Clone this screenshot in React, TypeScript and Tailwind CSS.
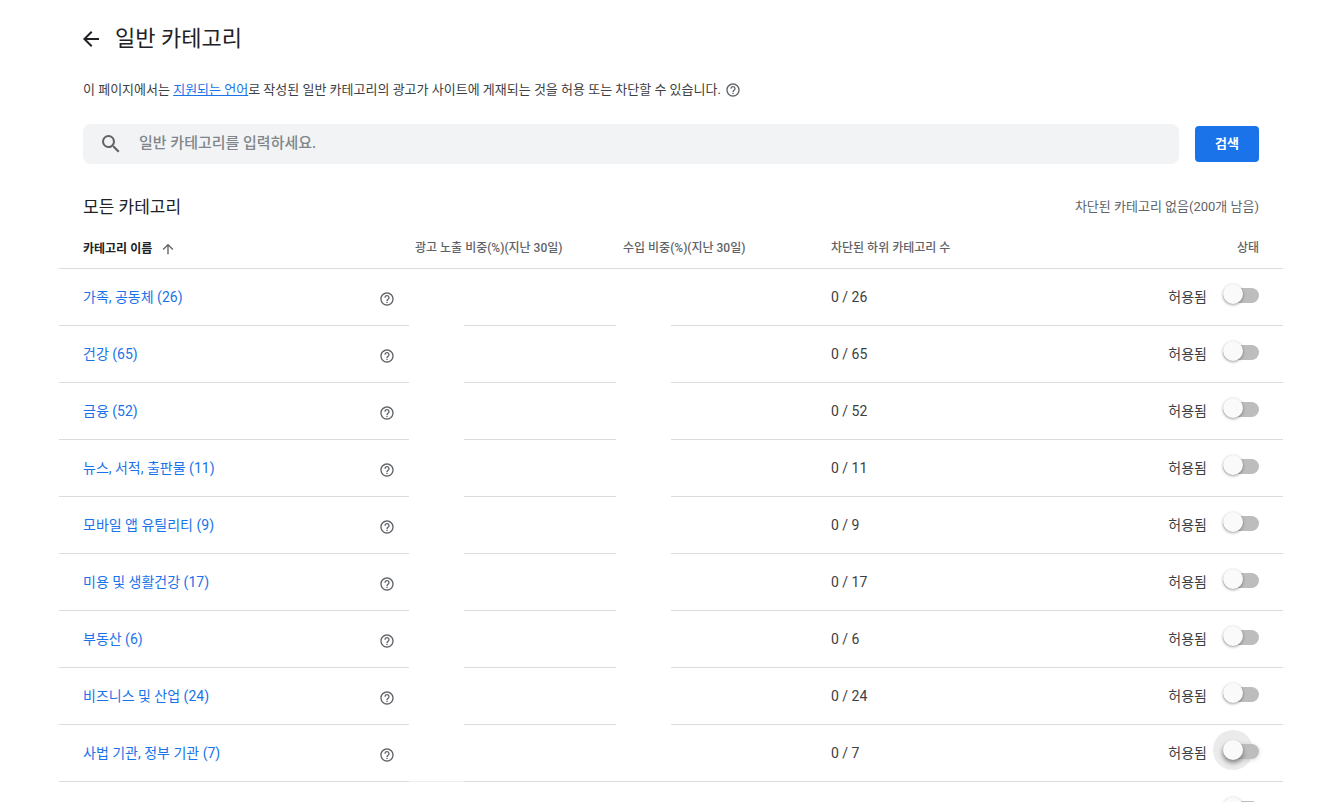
import { useState } from "react";
import clsx from "clsx";
import {
  MdArrowBack,
  MdArrowUpward,
  MdHelpOutline,
  MdSearch,
} from "react-icons/md";

interface Category {
  id: string;
  name?: string;
  count?: number;
  focused?: boolean;
}

const categories: Category[] = [
  { id: "family", name: "가족, 공동체", count: 26 },
  { id: "health", name: "건강", count: 65 },
  { id: "finance", name: "금융", count: 52 },
  { id: "news", name: "뉴스, 서적, 출판물", count: 11 },
  { id: "apps", name: "모바일 앱 유틸리티", count: 9 },
  { id: "beauty", name: "미용 및 생활건강", count: 17 },
  { id: "property", name: "부동산", count: 6 },
  { id: "business", name: "비즈니스 및 산업", count: 24 },
  { id: "law", name: "사법 기관, 정부 기관", count: 7, focused: true },
  { id: "next" },
];

// Share column: the figure area on the left has its own bottom line
function ShareCell({ line }: { line: string }) {
  return (
    <td className="p-0">
      <div className="flex h-[57px]">
        <span className={clsx("w-[55px] border-b", line)} />
        <span className="flex-1 border-b border-[#dadce0]" />
      </div>
    </td>
  );
}

interface CategoryRowProps {
  category: Category;
  blocked: boolean;
  onToggle: (id: string) => void;
}

function CategoryRow({ category, blocked, onToggle }: CategoryRowProps) {
  const { id, name, count, focused } = category;

  return (
    <tr>
      <td className="p-0">
        <div className="flex h-[57px] items-center justify-between border-b border-[#dadce0] pr-3.5 pl-6">
          {name && (
            <>
              <a href="#" className="text-[#1a73e8]">
                {name} ({count})
              </a>
              <button type="button" aria-label="도움말" className="mt-1">
                <MdHelpOutline className="size-4 text-[#5f6368]" />
              </button>
            </>
          )}
        </div>
      </td>
      <ShareCell line={focused ? "border-[#eeeeee]" : "border-transparent"} />
      <ShareCell line={focused ? "border-[#dadce0]" : "border-transparent"} />
      <td className="p-0">
        <div className="flex h-[57px] items-center border-b border-[#dadce0] pl-[7px]">
          {name && `0 / ${count}`}
        </div>
      </td>
      <td className="p-0">
        <div className="flex h-[57px] items-center justify-end border-b border-[#dadce0] pr-6">
          <label className="relative flex h-5 items-center gap-4">
            {name && (blocked ? "차단됨" : "허용됨")}
            {focused && (
              <span className="absolute -top-[13px] right-1.5 size-10 rounded-full bg-[#ebebeb]" />
            )}
            <input
              type="checkbox"
              role="switch"
              aria-label={name ?? "카테고리"}
              checked={blocked}
              onChange={() => onToggle(id)}
              className={clsx(
                "relative mb-[3px] h-[15px] w-9 cursor-pointer appearance-none rounded-full bg-[#bdbdbd] before:absolute before:-top-1 before:left-0 before:size-5 before:rounded-full before:bg-[#fafafa] checked:bg-[#8ab4f8] checked:before:left-4 checked:before:bg-[#1a73e8]",
                focused
                  ? "shadow-[0_1px_5px_rgba(0,0,0,0.15)] before:shadow-[0_3px_5px_rgba(0,0,0,0.4)]"
                  : "before:shadow-[0_1px_3px_rgba(0,0,0,0.4)]"
              )}
            />
          </label>
        </div>
      </td>
    </tr>
  );
}

export default function App() {
  const [query, setQuery] = useState("");
  const [blockedIds, setBlockedIds] = useState<string[]>([]);

  const handleToggle = (id: string) => {
    setBlockedIds((prev) =>
      prev.includes(id) ? prev.filter((b) => b !== id) : [...prev, id]
    );
  };

  return (
    <main className="h-screen overflow-hidden bg-white px-[59px] pt-5 font-[Roboto,'Noto_Sans_CJK_KR',sans-serif] text-sm text-[#3c4043]">
      {/* Title */}
      <header className="flex h-[38px] items-center gap-3 pl-5">
        <button type="button" aria-label="뒤로">
          <MdArrowBack className="size-6 text-[#202124]" />
        </button>
        <h1 className="text-[22px] leading-7 text-[#202124]">일반 카테고리</h1>
      </header>

      <div className="px-6">
        <p className="mt-5 flex h-6 items-center text-[13px]">
          <span>
            이 페이지에서는{" "}
            <a href="#" className="text-[#1a73e8] underline">
              지원되는 언어
            </a>
            로 작성된 일반 카테고리의 광고가 사이트에 게재되는 것을 허용 또는
            차단할 수 있습니다.
          </span>
          <button type="button" aria-label="도움말" className="ml-1">
            <MdHelpOutline className="size-4 text-[#5f6368]" />
          </button>
        </p>

        {/* Search */}
        <form
          className="mt-[22px] flex items-center gap-4"
          onSubmit={(e) => e.preventDefault()}
        >
          <label className="flex h-10 flex-1 items-center gap-4 rounded-lg bg-[#f1f3f4] px-4">
            <MdSearch className="size-6 text-[#5f6368]" />
            <input
              type="text"
              aria-label="일반 카테고리 검색"
              placeholder="일반 카테고리를 입력하세요."
              value={query}
              onChange={(e) => setQuery(e.target.value)}
              className="flex-1 bg-transparent text-[15px] font-medium outline-none placeholder:text-[#80868b]"
            />
          </label>
          <button
            type="submit"
            className="h-9 w-16 rounded bg-[#1a73e8] text-[13px] font-bold text-white"
          >
            검색
          </button>
        </form>

        <div className="mt-[26px] flex h-[34px] items-center justify-between">
          <h2 className="text-[17px] leading-6 text-[#202124]">
            모든 카테고리
          </h2>
          <p className="text-[13px] text-[#5f6368]">
            차단된 카테고리 없음(200개 남음)
          </p>
        </div>
      </div>

      {/* Categories */}
      <table className="w-full table-fixed border-separate border-spacing-0">
        <colgroup>
          <col className="w-[350px]" />
          <col className="w-[207px]" />
          <col className="w-[208px]" />
          <col />
          <col />
        </colgroup>
        <thead>
          <tr className="h-[45px] text-left text-xs text-[#5f6368] *:border-b *:border-[#dadce0] *:font-medium">
            <th className="pt-1.5 pr-0 pb-0 pl-6">
              <button
                type="button"
                className="flex items-center gap-2 font-bold text-[#202124]"
              >
                카테고리 이름
                <MdArrowUpward className="size-4 text-[#5f6368]" />
              </button>
            </th>
            <th className="pt-1 pr-0 pb-0 pl-1.5">
              광고 노출 비중(%)(지난 30일)
            </th>
            <th className="pt-1 pr-0 pb-0 pl-[7px]">
              수입 비중(%)(지난 30일)
            </th>
            <th className="pt-1 pr-0 pb-0 pl-[7px]">
              차단된 하위 카테고리 수
            </th>
            <th className="pt-1 pr-6 pb-0 pl-0 text-right">상태</th>
          </tr>
        </thead>
        <tbody>
          {categories.map((category) => (
            <CategoryRow
              key={category.id}
              category={category}
              blocked={blockedIds.includes(category.id)}
              onToggle={handleToggle}
            />
          ))}
        </tbody>
      </table>
    </main>
  );
}
